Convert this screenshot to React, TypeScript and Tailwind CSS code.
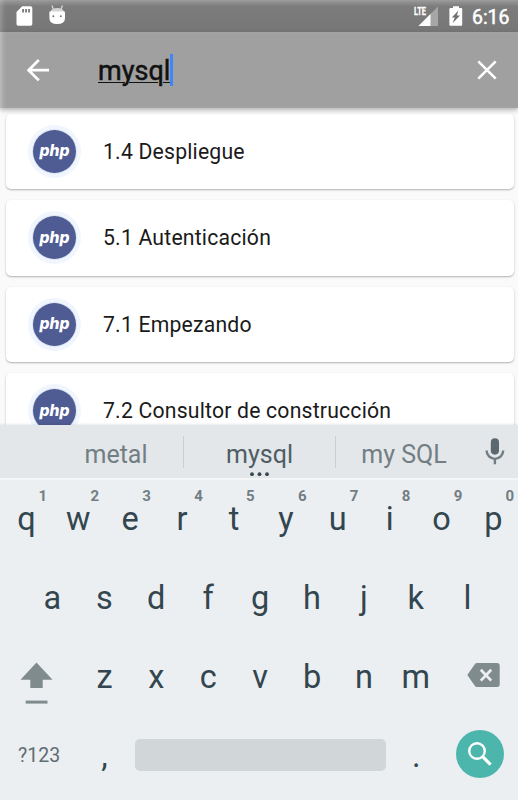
import type { ReactNode } from "react";

const RESULTS = ["1.4 Despliegue", "5.1 Autenticación", "7.1 Empezando", "7.2 Consultor de construcción"];

const TOP_KEYS = ["q", "w", "e", "r", "t", "y", "u", "i", "o", "p"];
const HOME_KEYS = ["a", "s", "d", "f", "g", "h", "j", "k", "l"];
const BOTTOM_KEYS = ["z", "x", "c", "v", "b", "n", "m"];

function StatusBar() {
  return (
    <div className="flex h-8 shrink-0 items-start bg-linear-to-b from-[#9b9b9b] via-[#7c7c7c] via-20% to-[#777777] pt-[5px] text-white shadow-[inset_5px_0_5px_-3px_rgba(255,255,255,0.25)]">
      <svg className="ml-4 mt-px" width="17" height="20" viewBox="0 0 17 20">
        <path d="M6.2 0.3H14.6Q16.3 0.3 16.3 2V18Q16.3 19.7 14.6 19.7H2.2Q0.5 19.7 0.5 18V6Z" fill="#fff" />
        <path d="M6.2 3h1.7v3.6H6.2zM9.2 3h1.7v3.6H9.2zM12.2 3h1.7v3.6h-1.7z" fill="#707070" />
      </svg>
      <svg className="ml-4" width="17" height="20" viewBox="0 0 17 20">
        <path d="M3 0.5L4.4 4.6M13.4 0.5L12 4.6" stroke="#d8d8d8" strokeWidth="1.3" />
        <path d="M1.6 6.6Q2.4 3 8.2 3Q14 3 14.8 6.6Z" fill="#d4d4d4" />
        <path d="M0.4 7.6Q0.4 6.2 1.8 6.2H14.6Q16 6.2 16 7.6V13Q16 19 8.2 19Q0.4 19 0.4 13Z" fill="#fff" />
        <circle cx="4.3" cy="11.3" r="1" fill="#777" />
        <circle cx="11.8" cy="11.3" r="1" fill="#777" />
      </svg>
      <div className="ml-auto flex items-start">
        <svg width="25" height="22" viewBox="0 0 25 22">
          <path d="M24 1.5V21H4.5Z" fill="#a6a6a6" />
          <path d="M16.5 9V21H4.5Z" fill="#fff" />
          <text x="0" y="10.3" fill="#fff" stroke="#fff" strokeWidth="0.3" fontFamily="Roboto, sans-serif" fontSize="11.2" fontWeight="700" textLength="12" lengthAdjust="spacingAndGlyphs">
            LTE
          </text>
        </svg>
        <svg className="ml-2.5 mt-px" width="14" height="20" viewBox="0 0 14 20">
          <path d="M4 0.2H10V2H12.2Q13.2 2 13.2 3V18.7Q13.2 19.7 12.2 19.7H1.4Q0.4 19.7 0.4 18.7V3Q0.4 2 1.4 2H4Z" fill="#fff" />
          <path d="M9.4 4.4L2.8 11.4H5.8L3.6 17.2L11 9.5H7.9Z" fill="#707070" />
        </svg>
        <span className="ml-[9px] mr-2 w-[38px] whitespace-nowrap text-[19.4px] leading-[25px] [-webkit-text-stroke:0.5px_#fff]">6:16</span>
      </div>
    </div>
  );
}

function SearchBar() {
  return (
    <div className="relative z-10 flex h-[76px] shrink-0 items-center bg-[#a0a0a0] shadow-[0_2px_5px_rgba(0,0,0,0.3),inset_5px_0_5px_-3px_rgba(255,255,255,0.35)]">
      <svg className="ml-[26px]" width="24" height="24" viewBox="0 0 24 24" fill="none" stroke="#fff" strokeWidth="2.7">
        <path d="M23 12.2H2.5M12.8 2L2.6 12.2L12.8 22.4" />
      </svg>
      <div className="ml-12 flex items-center">
        <span className="pt-px text-[27px] leading-8 text-[#111111] underline decoration-1 underline-offset-2 [-webkit-text-stroke:0.5px_#111111]">mysql</span>
        <span className="h-8 w-[3px] bg-[#4285f4]" />
      </div>
      <svg className="ml-auto mr-[21px]" width="20" height="20" viewBox="0 0 20 20" fill="none" stroke="#fff" strokeWidth="2.6">
        <path d="M1.3 1.3L18.7 18.7M18.7 1.3L1.3 18.7" />
      </svg>
    </div>
  );
}

function ResultCard({ title }: { title: string }) {
  return (
    <div className="flex h-[75.5px] shrink-0 items-center rounded-[5px] bg-white shadow-[0_1px_2px_rgba(0,0,0,0.3)]">
      <div className="ml-[27px] flex size-[43px] items-center justify-center rounded-full bg-[#4f5b93] shadow-[0_0_0_1px_#dde6f3,0_0_0_5px_#f1f6fe]">
        <svg width="40" height="30" viewBox="0 0 40 30">
          <text x="5.5" y="19.6" fill="#fff" fontFamily="Inter, sans-serif" fontSize="16" fontStyle="italic" fontWeight="800" textLength="30" lengthAdjust="spacingAndGlyphs">
            php
          </text>
        </svg>
      </div>
      <span className="ml-[27.5px] whitespace-nowrap pt-px text-[21.2px] tracking-[0.2px] text-[#1a1a1a]">{title}</span>
    </div>
  );
}

function Suggestions() {
  return (
    <div className="flex h-[53px] shrink-0 items-center bg-[#e3e7e9] text-[25px] leading-9 text-[#727e84]">
      <span className="ml-12 w-[135px] pl-px pt-[6px] text-center">metal</span>
      <span className="h-8 w-px bg-[#c9ced1]" />
      <span className="relative w-[151px] pt-[6px] text-center text-[#4f5d65]">
        mysql
        <svg className="absolute left-[65px] top-[41px]" width="22" height="5" viewBox="0 0 22 5" fill="#37474f">
          <circle cx="3" cy="2.2" r="1.9" />
          <circle cx="10.5" cy="2.2" r="1.9" />
          <circle cx="18" cy="2.2" r="1.9" />
        </svg>
      </span>
      <span className="h-8 w-px bg-[#c9ced1]" />
      <span className="w-[136px] pt-[6px] text-center">my SQL</span>
      <svg className="ml-[13px]" width="20" height="27" viewBox="0 0 20 27">
        <rect x="5.8" y="0.3" width="8.2" height="16.4" rx="4.1" fill="#5b686f" />
        <path d="M1.6 12.6A8.3 8.3 0 0 0 18.2 12.6M9.9 20.6V26.3" fill="none" stroke="#727e84" strokeWidth="2.4" />
      </svg>
    </div>
  );
}

function Key({ label, hint }: { label: string; hint?: number }) {
  return (
    <div className="relative flex w-[51.9px] shrink-0 justify-center text-[32.5px] leading-[40px] text-[#33464f]">
      {hint !== undefined && (
        <span className="absolute -top-[13px] left-[38px] text-[15px] font-bold leading-5 text-[#727e84]">{hint}</span>
      )}
      {label}
    </div>
  );
}

function KeyRow({ children }: { children: ReactNode }) {
  return <div className="flex h-[79px] shrink-0">{children}</div>;
}

function Keyboard() {
  return (
    <div className="z-10 flex h-[375px] shrink-0 flex-col overflow-hidden bg-[#eceff1] shadow-[0_0_3px_rgba(0,0,0,0.15)]">
      <Suggestions />
      <div className="flex flex-col border-t-2 border-[#f3f5f6] pl-[0.5px] pt-[19px]">
        <KeyRow>
          {TOP_KEYS.map((k, i) => (
            <Key key={k} label={k} hint={(i + 1) % 10} />
          ))}
        </KeyRow>
        <KeyRow>
          <div className="w-[26px]" />
          {HOME_KEYS.map((k) => (
            <Key key={k} label={k} />
          ))}
        </KeyRow>
        <KeyRow>
          <div className="w-[78px] pl-[19.4px] pt-[5px]">
            <svg width="33" height="43" viewBox="0 0 33 43" fill="#808b8e">
              <path d="M16.5 0.5L32.5 17.8H22.7V26H10.3V17.8H0.5Z" />
              <rect x="5.7" y="38.6" width="21.8" height="3" />
            </svg>
          </div>
          {BOTTOM_KEYS.map((k) => (
            <Key key={k} label={k} />
          ))}
          <svg className="ml-[25px] mt-1.5" width="33" height="24" viewBox="0 0 33 24">
            <path d="M10 0H30Q32.7 0 32.7 2.7V21.3Q32.7 24 30 24H10Q8.6 24 7.8 22.8L0.3 12L7.8 1.2Q8.6 0 10 0Z" fill="#808b8e" />
            <path d="M13.8 6.8L24.2 17.6M24.2 6.8L13.8 17.6" stroke="#eceff1" strokeWidth="2.8" />
          </svg>
        </KeyRow>
        <KeyRow>
          <span className="w-[78px] pl-[17.5px] pt-0.5 text-[19.5px] leading-9 text-[#5f6d74]">?123</span>
          <Key label="," />
          <div className="ml-[4.5px] mt-[3px] h-8 w-[251px] rounded-[5px] bg-[#d1d6d9]" />
          <div className="ml-[4.5px]">
            <Key label="." />
          </div>
          <div className="-mt-1.5 ml-[14px] flex size-12 items-center justify-center rounded-full bg-[#4db6ac]">
            <svg width="24" height="24" viewBox="0 0 24 24" fill="none" stroke="#fff">
              <circle cx="9" cy="9" r="7.8" strokeWidth="2.4" />
              <path d="M14.6 14.6L22.6 22.6" strokeWidth="3.3" />
            </svg>
          </div>
        </KeyRow>
      </div>
    </div>
  );
}

export default function App() {
  return (
    <div className="flex h-[800px] w-[518px] flex-col overflow-hidden bg-[#fafafa] font-[Roboto,sans-serif]">
      <StatusBar />
      <SearchBar />
      <div className="flex min-h-0 flex-1 flex-col gap-[11px] overflow-hidden pl-[5.5px] pr-1 pt-[5.5px]">
        {RESULTS.map((title) => (
          <ResultCard key={title} title={title} />
        ))}
      </div>
      <Keyboard />
    </div>
  );
}
